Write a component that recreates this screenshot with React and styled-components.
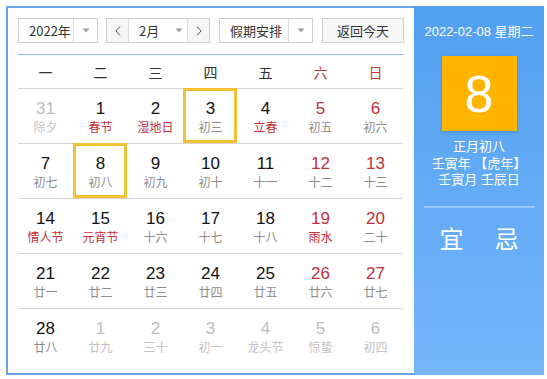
import React from "react";
import styled, { createGlobalStyle, css } from "styled-components";

const Global = createGlobalStyle`
  html, body { margin: 0; padding: 0; background: #fff; }
  body { font-family: "Liberation Sans", "Noto Sans CJK SC", sans-serif; }
`;

const Page = styled.div`
  padding: 6px;
`;

const Calendar = styled.div`
  display: flex;
  width: 538px;
  height: 369px;
`;

const Left = styled.div`
  width: 396px;
  border: 2px solid #6aa6e6;
  border-right: none;
  padding: 10px 0 0 10px;
  box-sizing: content-box;
  height: 355px;
`;

const Toolbar = styled.div`
  display: flex;
  align-items: center;
  height: 25px;
  width: 386px;
`;

const Box = styled.div`
  display: flex;
  height: 25px;
  box-sizing: border-box;
  border: 1px solid #cdcdcd;
  background: #fff;
  width: ${(p) => p.$w}px;
  margin-left: ${(p) => p.$ml || 0}px;
  font-family: "Noto Sans CJK SC", sans-serif;
  font-size: 13px;
  color: #333;
`;

const Label = styled.div`
  flex: 1;
  display: flex;
  align-items: center;
  padding-left: ${(p) => p.$pl || 10}px;
  line-height: 1;
`;

const Seg = styled.div`
  width: ${(p) => p.$w}px;
  display: flex;
  align-items: center;
  justify-content: center;
  border-left: ${(p) => (p.$bl ? "1px solid #dcdcdc" : "none")};
  border-right: ${(p) => (p.$br ? "1px solid #dcdcdc" : "none")};
  background: ${(p) => p.$bg || "transparent"};
  box-sizing: border-box;
`;

const Button = styled.div`
  width: 82px;
  height: 25px;
  margin-left: 9px;
  box-sizing: border-box;
  border: 1px solid #cdcdcd;
  background: #f7f7f7;
  display: flex;
  align-items: center;
  justify-content: center;
  font-family: "Noto Sans CJK SC", sans-serif;
  font-size: 13px;
  color: #333;
`;

const Caret = () => (
  <svg width="8" height="5" viewBox="0 0 8 5">
    <path d="M0.5 0.5 L7.5 0.5 L4 4.5 Z" fill="#a0a0a0" />
  </svg>
);

const Chevron = ({ dir }) => (
  <svg width="6" height="10" viewBox="0 0 6 10">
    <polyline
      points={dir === "left" ? "5,0.5 1,5 5,9.5" : "1,0.5 5,5 1,9.5"}
      fill="none"
      stroke="#555"
      strokeWidth="1"
    />
  </svg>
);

const BlueLine = styled.div`
  width: 386px;
  height: 1px;
  background: #8fbbe9;
  margin-top: 11px;
`;

const Grid = styled.div`
  width: 385px;
`;

const WeekRow = styled.div`
  display: grid;
  grid-template-columns: repeat(7, 55px);
  height: 33px;
  align-items: center;
`;

const WeekDay = styled.div`
  text-align: center;
  font-family: "Noto Sans CJK SC", sans-serif;
  font-size: 14px;
  color: ${(p) => (p.$red ? "#c4353a" : "#333")};
`;

const Row = styled.div`
  display: grid;
  grid-template-columns: repeat(7, 55px);
  height: 55px;
  box-sizing: border-box;
  border-top: 1px solid #d4d4d4;
`;

const Cell = styled.div`
  position: relative;
  display: flex;
  flex-direction: column;
  align-items: center;
  padding-top: 10px;
  box-sizing: border-box;
  ${(p) =>
    p.$selected &&
    css`
      &::after {
        content: "";
        position: absolute;
        top: -1px;
        left: 0;
        right: 1px;
        bottom: 0;
        border: 3px solid #f3c033;
      }
    `}
`;

const Num = styled.div`
  font-family: "Liberation Sans", sans-serif;
  font-size: 17px;
  line-height: 20px;
  color: ${(p) => (p.$dim ? "#bdbdbd" : p.$red ? "#c1303a" : "#111")};
`;

const Lunar = styled.div`
  font-family: "Noto Sans CJK SC", sans-serif;
  font-size: 12px;
  line-height: 16px;
  color: ${(p) => (p.$dim ? "#c2c2c2" : p.$red ? "#c1303a" : "#8c8c8c")};
`;

const Side = styled.div`
  width: 130px;
  height: 369px;
  background: linear-gradient(#51a0f0, #74b6fa);
  display: flex;
  flex-direction: column;
  align-items: center;
  padding-top: 17px;
  box-sizing: border-box;
  color: #fff;
  font-family: "Noto Sans CJK SC", sans-serif;
`;

const DateText = styled.div`
  font-size: 13px;
  line-height: 18px;
  font-family: "Liberation Sans", "Noto Sans CJK SC", sans-serif;
`;

const DayBox = styled.div`
  width: 75px;
  height: 75px;
  margin-top: 15px;
  background: #ffb500;
  box-shadow: 0 1px 3px rgba(0, 0, 0, 0.18);
  display: flex;
  align-items: center;
  justify-content: center;
  font-family: "Liberation Sans", sans-serif;
  font-size: 52px;
  color: #fff;
`;

const Info = styled.div`
  margin-top: 8px;
  font-family: "Liberation Sans", "Noto Sans CJK SC", sans-serif;
  font-size: 13px;
  line-height: 16.5px;
  text-align: center;
`;

const Divider = styled.div`
  width: 111px;
  height: 2px;
  background: rgba(255, 255, 255, 0.35);
  margin-top: 17px;
`;

const YiJi = styled.div`
  display: flex;
  gap: 31px;
  margin-top: 15px;
  font-size: 24px;
  line-height: 30px;
`;

const weeks = ["一", "二", "三", "四", "五", "六", "日"];

const rows = [
  [["31", "除夕", "dim"], ["1", "春节", "fest"], ["2", "湿地日", "fest"], ["3", "初三", "sel"], ["4", "立春", "fest"], ["5", "初五"], ["6", "初六"]],
  [["7", "初七"], ["8", "初八", "sel"], ["9", "初九"], ["10", "初十"], ["11", "十一"], ["12", "十二"], ["13", "十三"]],
  [["14", "情人节", "fest"], ["15", "元宵节", "fest"], ["16", "十六"], ["17", "十七"], ["18", "十八"], ["19", "雨水", "fest"], ["20", "二十"]],
  [["21", "廿一"], ["22", "廿二"], ["23", "廿三"], ["24", "廿四"], ["25", "廿五"], ["26", "廿六"], ["27", "廿七"]],
  [["28", "廿八"], ["1", "廿九", "dim"], ["2", "三十", "dim"], ["3", "初一", "dim"], ["4", "龙头节", "dim"], ["5", "惊蛰", "dim"], ["6", "初四", "dim"]],
];

export default function App() {
  return (
    <Page>
      <Global />
      <Calendar>
        <Left>
          <Toolbar>
            <Box $w={80}>
              <Label $pl={10}>2022年</Label>
              <Seg $w={24} $bl>
                <Caret />
              </Seg>
            </Box>
            <Box $w={104} $ml={8}>
              <Seg $w={22} $br $bg="#f6f6f6">
                <Chevron dir="left" />
              </Seg>
              <Label $pl={10}>2月</Label>
              <Seg $w={16}>
                <Caret />
              </Seg>
              <Seg $w={22} $bl $bg="#f6f6f6">
                <Chevron dir="right" />
              </Seg>
            </Box>
            <Box $w={94} $ml={9}>
              <Label $pl={10}>假期安排</Label>
              <Seg $w={24} $bl>
                <Caret />
              </Seg>
            </Box>
            <Button>返回今天</Button>
          </Toolbar>
          <BlueLine />
          <Grid>
            <WeekRow>
              {weeks.map((w, i) => (
                <WeekDay key={w} $red={i >= 5}>
                  {w}
                </WeekDay>
              ))}
            </WeekRow>
            {rows.map((r, ri) => (
              <Row key={ri}>
                {r.map(([n, l, t], ci) => {
                  const dim = t === "dim";
                  return (
                    <Cell key={ci} $selected={t === "sel"}>
                      <Num $dim={dim} $red={ci >= 5}>
                        {n}
                      </Num>
                      <Lunar $dim={dim} $red={t === "fest"}>
                        {l}
                      </Lunar>
                    </Cell>
                  );
                })}
              </Row>
            ))}
          </Grid>
        </Left>
        <Side>
          <DateText>2022-02-08 星期二</DateText>
          <DayBox>8</DayBox>
          <Info>
            <div>正月初八</div>
            <div>壬寅年 【虎年】</div>
            <div>壬寅月 壬辰日</div>
          </Info>
          <Divider />
          <YiJi>
            <span>宜</span>
            <span>忌</span>
          </YiJi>
        </Side>
      </Calendar>
    </Page>
  );
}
